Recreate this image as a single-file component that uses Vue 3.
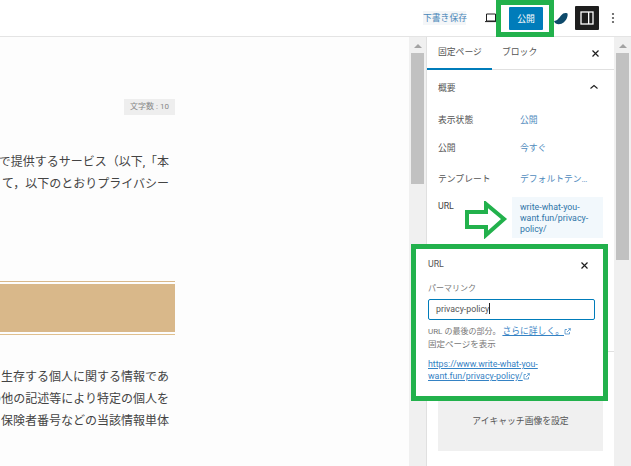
<script setup>
const upper = ['で提供するサービス（以下,「本', 'て，以下のとおりプライバシー']
const lower = ['生存する個人に関する情報であ', 'の他の記述等により特定の個人を', '保険者番号などの当該情報単体']
const rows = [
  { label: '表示状態', value: '公開', cls: 'r1' },
  { label: '公開', value: '今すぐ', cls: 'r2' },
  { label: 'テンプレート', value: 'デフォルトテン…', cls: 'r3' }
]
</script>

<template>
  <div class="page">
    <header class="topbar">
      <a class="save">下書き保存</a>
      <svg class="desktop" width="14" height="12" viewBox="0 0 14 12"><path d="M2.5 2h9v7h-9z M1 9.6h12" fill="none" stroke="#1e1e1e" stroke-width="1"/></svg>
      <button class="publish">公開</button>
      <svg class="swoosh" width="14" height="13" viewBox="0 0 14 13"><path d="M0 9C3 9 5 6 7 3.500C9 1.200 11 0.500 13.500 1.500C14.300 5 11.500 10 7.500 11.800C4 13 1 12 0 9Z" fill="#0e4a6b"/></svg>
      <button class="panel-btn">
        <svg width="14" height="14" viewBox="0 0 14 14"><rect x="1" y="1" width="12" height="12" fill="none" stroke="#fff" stroke-width="1.300"/><rect x="8" y="1" width="1.300" height="12" fill="#fff"/></svg>
      </button>
      <svg class="kebab" width="4" height="12" viewBox="0 0 4 12"><circle cx="2" cy="2" r="1.100" fill="#555"/><circle cx="2" cy="6" r="1.100" fill="#555"/><circle cx="2" cy="10" r="1.100" fill="#555"/></svg>
    </header>

    <div class="workspace">
      <main class="canvas">
        <div class="count"><span>文字数 : 10</span></div>
        <p class="para upper"><span v-for="l in upper" :key="l" class="line">{{ l }}</span></p>
        <div class="heading-band"><div class="band"></div></div>
        <p class="para lower"><span v-for="l in lower" :key="l" class="line">{{ l }}</span></p>
      </main>

      <div class="scroll"><i class="arrow"></i><i class="thumb short"></i></div>

      <aside class="sidebar">
        <div class="tabs">
          <span class="tab active">固定ページ</span>
          <span class="tab">ブロック</span>
          <svg class="close" width="9" height="9" viewBox="0 0 9 9"><path d="M1.500 1.500l6 6M7.500 1.500l-6 6" stroke="#1e1e1e" stroke-width="1.200"/></svg>
        </div>
        <div class="summary">
          <div class="sum-head">
            <span>概要</span>
            <svg width="10" height="6" viewBox="0 0 10 6"><path d="M1.500 4.500L5 1.500l3.500 3" fill="none" stroke="#1e1e1e" stroke-width="1.100"/></svg>
          </div>
          <div v-for="r in rows" :key="r.label" class="row" :class="r.cls">
            <span class="lab">{{ r.label }}</span><span class="val">{{ r.value }}</span>
          </div>
          <div class="row url-row">
            <span class="lab">URL</span>
            <span class="url-val">write-what-you-<br>want.fun/privacy-<br>policy/</span>
          </div>
        </div>
        <div class="feature"><button class="feature-btn">アイキャッチ画像を設定</button></div>
      </aside>

      <div class="scroll right"><i class="arrow"></i><i class="thumb long"></i></div>
    </div>

    <section class="popover">
      <div class="pop-head">
        <span>URL</span>
        <svg width="9" height="9" viewBox="0 0 9 9"><path d="M1.500 1.500l6 6M7.500 1.500l-6 6" stroke="#1e1e1e" stroke-width="1.200"/></svg>
      </div>
      <div class="perma">パーマリンク</div>
      <div class="field">privacy-policy<i class="caret"></i></div>
      <div class="help">URL の最後の部分。 <a>さらに詳しく。</a>
        <svg class="ext" width="7" height="7" viewBox="0 0 7 7"><path d="M3 1.500H1v4.500h4.500V4M3 4l3.500-3.500M4.300 0.700h2v2" fill="none" stroke="#3582c4" stroke-width=".7"/></svg>
      </div>
      <div class="help second">固定ページを表示</div>
      <div class="full-link"><a>https://www.write-what-you-</a><br><a>want.fun/privacy-policy/</a>
        <svg class="ext" width="7" height="7" viewBox="0 0 7 7"><path d="M3 1.500H1v4.500h4.500V4M3 4l3.500-3.500M4.300 0.700h2v2" fill="none" stroke="#3582c4" stroke-width=".7"/></svg>
      </div>
    </section>

    <div class="mark mark-top"></div>
    <svg class="mark-arrow" width="44" height="38" viewBox="0 0 44 38"><path d="M3 11H22V3L40 18L22 34V26H3Z" fill="#fff" stroke="#22b14c" stroke-width="4"/></svg>
  </div>
</template>

<style>
html, body { margin: 0; padding: 0; background: #fff; }
</style>

<style scoped>
.page {
  position: relative;
  width: 631px;
  height: 466px;
  overflow: hidden;
  background: #fdfdfd;
  font-family: Roboto, "Noto Sans CJK JP", sans-serif;
  font-size: 8.800px;
  color: #555;
}
.topbar {
  height: 37px;
  box-sizing: border-box;
  border-bottom: 1px solid #e4e4e4;
  background: #fff;
  display: flex;
  align-items: center;
}
.save { margin-left: 423px; color: #4a86b8; background: #f4f6f8; line-height: 14px; width: 43px; white-space: nowrap; }
.desktop { margin-left: 18px; }
.publish {
  margin-left: 11px;
  width: 34px; height: 23px;
  border: 0; border-radius: 1px; padding: 0;
  background: #007cba; color: #fff;
  font: 8.800px "Noto Sans CJK JP", sans-serif;
}
.swoosh { margin-left: 11px; }
.panel-btn {
  margin-left: 7px;
  width: 24px; height: 24px; padding: 0;
  border: 0; border-radius: 1px;
  background: #1e1e1e;
  display: flex; align-items: center; justify-content: center;
}
.kebab { margin-left: 12px; }

.workspace { display: flex; height: 429px; }
.canvas {
  width: 409px;
  flex: none;
  background: #fdfdfd;
  overflow: hidden;
}
.count { width: 175px; display: flex; justify-content: flex-end; margin-top: 62px; }
.count span { width: 51px; height: 16px; background: #eee; color: #888; font-size: 8px; line-height: 16px; text-align: center; }
.para { margin: 0; width: 169px; font-size: 12px; color: #444; }
.line { display: flex; justify-content: flex-end; white-space: nowrap; height: 22px; line-height: 22px; }
.upper { margin-top: 36px; }
.heading-band {
  width: 175px; height: 54px; box-sizing: border-box;
  margin-top: 86px;
  border-top: 1px solid #d9b88a;
  border-bottom: 1px solid #e0c08e;
  padding: 2px 0;
}
.band { height: 48px; background: #d9b88a; }
.lower { margin-top: 31px; }

.scroll { width: 17px; flex: none; background: #f0f0f0; display: flex; flex-direction: column; align-items: center; }
.arrow { width: 0; height: 0; margin-top: 7px; border: 4px solid transparent; border-top: 0; border-bottom-color: #a3a3a3; }
.thumb { width: 13px; background: #c1c1c1; margin-top: 5px; }
.short { height: 131px; }
.long { height: 207px; }

.sidebar { width: 188px; flex: none; box-sizing: border-box; border-left: 1px solid #e0e0e0; background: #fff; }
.tabs { height: 33px; box-sizing: border-box; border-bottom: 1px solid #e0e0e0; display: flex; align-items: center; position: relative; }
.tab { height: 33px; line-height: 31px; box-sizing: border-box; padding: 0 11px; color: #555; white-space: nowrap; }
.tab.active { width: 65px; flex: none; border-bottom: 2px solid #007cba; }
.tab + .tab { padding-left: 10px; }
.close { margin-left: 43px; }
.summary { padding: 0 11px; height: 282px; box-sizing: border-box; border-bottom: 1px solid #e0e0e0; }
.sum-head { height: 34px; display: flex; align-items: center; justify-content: space-between; padding-right: 4px; }
.row { display: flex; }
.lab { width: 82px; flex: none; }
.val { color: #4f8bbd; white-space: nowrap; }
.r1 { margin-top: 9px; }
.r2 { margin-top: 15px; }
.r3 { margin-top: 18px; }
.url-row { margin-top: 12px; }
.url-row .lab { width: 74px; padding-top: 4px; color: #444; }
.url-val { width: 91px; flex: none; box-sizing: border-box; height: 41px; padding: 5px 8px 0; line-height: 11px; background: #f2f8fc; color: #2f75a8; }
.feature { padding: 0 11px; border-bottom: 1px solid #e0e0e0; height: 110px; box-sizing: border-box; }
.feature-btn {
  display: block; width: 165px; height: 63px; margin-top: 36px;
  padding: 2px 0 0; border: 0; background: #f0f0f0; color: #555;
  font: 8.800px "Noto Sans CJK JP", sans-serif;
}

.popover {
  position: absolute; left: 411px; top: 244px;
  width: 197px; height: 157px; box-sizing: border-box;
  border: 5px solid #22b14c;
  background: #fff;
  padding: 8px 12px 0;
}
.pop-head { display: flex; justify-content: space-between; align-items: center; height: 14px; padding-right: 1px; color: #555; }
.pop-head svg { margin-right: 1px; margin-top: 2px; }
.perma { margin-top: 12px; font-size: 8px; color: #777; line-height: 12px; }
.field {
  margin-top: 4px; width: 167px; height: 21px; box-sizing: border-box;
  padding-left: 7px;
  border: 1px solid #007cba; border-radius: 2px;
  line-height: 19px; color: #555; white-space: nowrap;
}
.caret { display: inline-block; width: 1px; height: 11px; background: #222; vertical-align: -2px; }
.help { margin-top: 5px; font-size: 8px; line-height: 12px; color: #777; white-space: nowrap; }
.help a { color: #3582c4; text-decoration: underline; font-size: 8.800px; }
.help.second { margin-top: 0; font-size: 8.500px; }
.full-link { margin-top: 8px; line-height: 12px; white-space: nowrap; }
.full-link a { color: #3582c4; text-decoration: underline; }
.ext { vertical-align: -1px; }

.mark-top {
  position: absolute; left: 496px; top: 0;
  width: 58px; height: 37px; box-sizing: border-box;
  border: 5px solid #22b14c;
}
.mark-arrow { position: absolute; left: 464px; top: 201px; }
</style>
